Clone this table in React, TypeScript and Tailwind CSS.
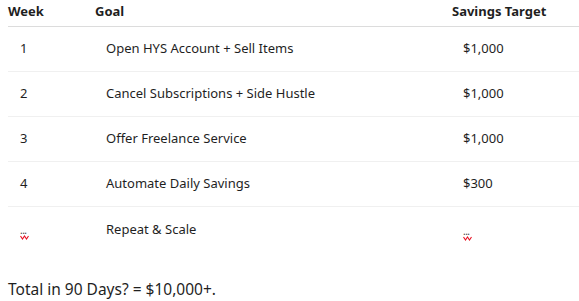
const rows = [
  { week: "1", goal: "Open HYS Account + Sell Items", target: "$1,000" },
  { week: "2", goal: "Cancel Subscriptions + Side Hustle", target: "$1,000" },
  { week: "3", goal: "Offer Freelance Service", target: "$1,000" },
  { week: "4", goal: "Automate Daily Savings", target: "$300" },
];

// "..." with a red spell-check squiggle under it
function Ellipsis() {
  return (
    <span className="inline-flex flex-col items-start">
      <span className="h-[4px] text-[10px] leading-[0px] tracking-[-0.5px] text-neutral-700">...</span>
      <svg width="9" height="5" viewBox="0 0 9 5" className="mt-[1px]">
        <path d="M0.5 1 L2.5 4 L4.5 1 L6.5 4 L8.5 1" fill="none" stroke="#e81123" strokeWidth="1.1" />
      </svg>
    </span>
  );
}

export default function App() {
  return (
    <div className="h-[301px] w-[579px] overflow-hidden bg-white font-['Noto_Sans',sans-serif] text-[#1f1f1f]">
      <div className="pl-2">
        {/* Header */}
        <div className="grid h-[27px] grid-cols-[87px_357px_1fr] border-b border-[#dcdcdc] text-[13px] font-bold">
          <div className="pt-[2px]">Week</div>
          <div className="pt-[2px]">Goal</div>
          <div className="pt-[2px]">Savings Target</div>
        </div>

        {/* Rows */}
        {rows.map((r) => (
          <div
            key={r.week}
            className="grid h-[45px] grid-cols-[87px_357px_1fr] items-center border-b border-[#f0f0f0] text-[13px]"
          >
            <div className="pl-3">{r.week}</div>
            <div className="pl-[11px]">{r.goal}</div>
            <div className="pl-[11px]">{r.target}</div>
          </div>
        ))}

        <div className="grid h-[44px] grid-cols-[87px_357px_1fr] text-[13px]">
          <div className="pl-3 pt-[13px]">
            <Ellipsis />
          </div>
          <div className="pl-[11px] pt-[13px]">Repeat &amp; Scale</div>
          <div className="pl-[11px] pt-[14px]">
            <Ellipsis />
          </div>
        </div>

        <p className="mt-[27px] text-[15.5px]">Total in 90 Days? = $10,000+.</p>
      </div>
    </div>
  );
}
